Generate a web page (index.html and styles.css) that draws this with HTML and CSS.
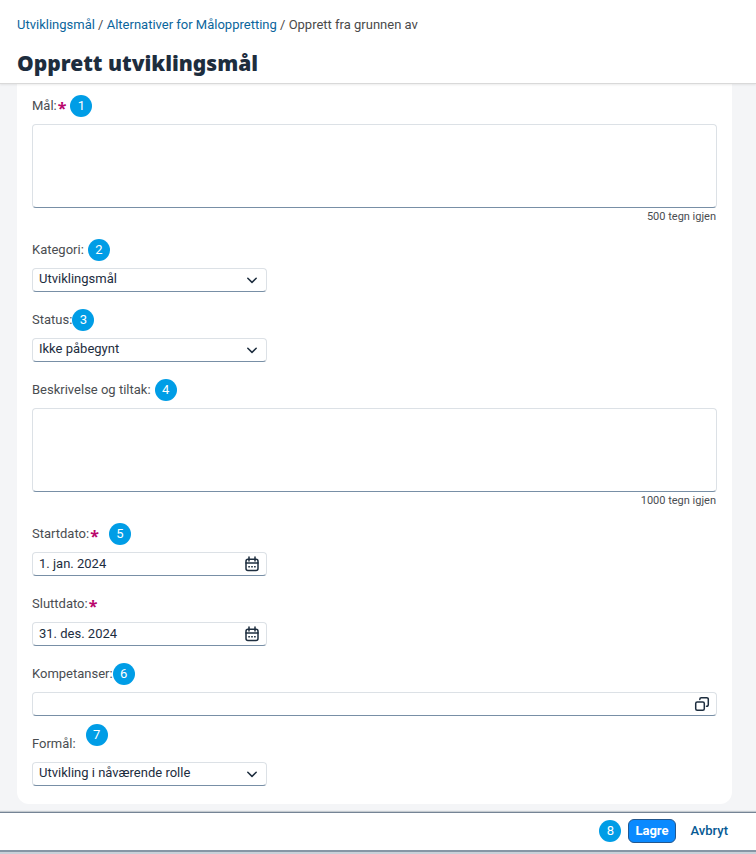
FILE: index.html
```html
<!DOCTYPE html>
<html lang="no">
<head>
	<meta charset="UTF-8">
	<meta name="viewport" content="width=device-width, initial-scale=1">
	<title>Opprett utviklingsmål</title>
	<link rel="stylesheet" href="styles.css">
</head>
<body>
	<header class="page-header">
		<nav class="breadcrumb">
			<a href="#">Utviklingsmål</a> / <a href="#">Alternativer for Måloppretting</a> / <span>Opprett fra grunnen av</span>
		</nav>
		<h1>Opprett utviklingsmål</h1>
	</header>

	<main class="content">
		<form class="card" id="goal-form">
			<div class="field">
				<div class="label-row">
					<label for="goal">Mål:<b class="required">*</b></label>
					<span class="badge">1</span>
				</div>
				<textarea class="control area" id="goal"></textarea>
				<div class="counter">500 tegn igjen</div>
			</div>

			<div class="field">
				<div class="label-row">
					<label for="category">Kategori:</label>
					<span class="badge">2</span>
				</div>
				<div class="box">
					<select class="control" id="category"><option>Utviklingsmål</option></select>
					<svg class="arrow" viewBox="0 0 16 16"><path d="M3.8 6.2 8 10.4l4.2-4.2"/></svg>
				</div>
			</div>

			<div class="field">
				<div class="label-row">
					<label for="status">Status:</label>
					<span class="badge near">3</span>
				</div>
				<div class="box">
					<select class="control" id="status"><option>Ikke påbegynt</option></select>
					<svg class="arrow" viewBox="0 0 16 16"><path d="M3.8 6.2 8 10.4l4.2-4.2"/></svg>
				</div>
			</div>

			<div class="field">
				<div class="label-row">
					<label for="description">Beskrivelse og tiltak:</label>
					<span class="badge">4</span>
				</div>
				<textarea class="control area" id="description"></textarea>
				<div class="counter">1000 tegn igjen</div>
			</div>

			<div class="field">
				<div class="label-row">
					<label for="start">Startdato:<b class="required">*</b></label>
					<span class="badge far">5</span>
				</div>
				<div class="box">
					<input class="control" id="start" type="text" value="1. jan. 2024">
					<button class="icon" type="button" aria-label="Velg startdato">
						<svg viewBox="0 0 16 16"><rect x="2" y="3.2" width="12" height="11.3" rx="2"/><path d="M2 7h12M5 1v4M11 1v4"/><path class="dots" d="M4.300 10.700h1.600M7.200 10.700h1.600M10.100 10.700h1.600"/></svg>
					</button>
				</div>
			</div>

			<div class="field">
				<div class="label-row">
					<label for="end">Sluttdato:<b class="required">*</b></label>
				</div>
				<div class="box">
					<input class="control" id="end" type="text" value="31. des. 2024">
					<button class="icon" type="button" aria-label="Velg sluttdato">
						<svg viewBox="0 0 16 16"><rect x="2" y="3.2" width="12" height="11.3" rx="2"/><path d="M2 7h12M5 1v4M11 1v4"/><path class="dots" d="M4.300 10.700h1.600M7.200 10.700h1.600M10.100 10.700h1.600"/></svg>
					</button>
				</div>
			</div>

			<div class="field">
				<div class="label-row">
					<label for="skills">Kompetanser:</label>
					<span class="badge near">6</span>
				</div>
				<div class="box wide">
					<input class="control" id="skills" type="text">
					<button class="icon" type="button" aria-label="Velg kompetanser">
						<svg viewBox="0 0 16 16"><rect x="1.700" y="6" width="8.600" height="8.300" rx="1.500"/><path d="M5.800 3.600V3.200a1.500 1.500 0 0 1 1.500-1.500h5.500a1.500 1.500 0 0 1 1.500 1.500v5.600a1.500 1.500 0 0 1-1.500 1.500h-.3"/></svg>
					</button>
				</div>
			</div>

			<div class="field">
				<div class="label-row">
					<label for="purpose">Formål:</label>
					<span class="badge far raised">7</span>
				</div>
				<div class="box">
					<select class="control" id="purpose"><option>Utvikling i nåværende rolle</option></select>
					<svg class="arrow" viewBox="0 0 16 16"><path d="M3.8 6.2 8 10.4l4.2-4.2"/></svg>
				</div>
			</div>
		</form>
	</main>

	<footer class="page-footer">
		<span class="badge">8</span>
		<button class="btn btn-primary" type="submit" form="goal-form">Lagre</button>
		<button class="btn" type="button">Avbryt</button>
	</footer>
</body>
</html>
```
FILE: styles.css
```css
* {
	box-sizing: border-box;
}

body {
	margin: 0;
	min-height: 100vh;
	padding-bottom: 2px;
	display: flex;
	flex-direction: column;
	background: #c9d1d9;
	color: #1d2d3e;
	font: 13px/20px Roboto, "Liberation Sans", sans-serif;
}

/* header */
.page-header {
	padding: 15px 17px 5px;
	background: #fff;
	border-bottom: 1px solid #d9d9d9;
	box-shadow: 0 1px 2px rgba(0, 0, 0, .08);
	position: relative;
}

.breadcrumb {
	color: #4a4a4a;
}

.breadcrumb a {
	color: #0b659c;
	text-decoration: none;
}

h1 {
	margin: 13px 0 0;
	font: 900 21px/30px "Noto Sans", sans-serif;
}

/* form */
.content {
	flex: 1;
	padding: 0 24px 8px 17px;
	background: #f4f5f7;
}

.card {
	padding: 10px 15px 18px;
	display: flex;
	flex-direction: column;
	gap: 16px;
	background: #fff;
	border-radius: 0 0 12px 12px;
}

.label-row {
	height: 24px;
	margin-bottom: 6px;
	display: flex;
	align-items: center;
	color: #4a4d51;
}

.label-row label {
	display: flex;
}

.required {
	height: 20px;
	margin-left: 1px;
	color: #ba066c;
	font: 700 16px/24px "Noto Sans", sans-serif;
}

.badge {
	width: 22px;
	height: 22px;
	margin-left: 4px;
	border-radius: 50%;
	background: #009de6;
	color: #fff;
	font-size: 13px;
	line-height: 22px;
	text-align: center;
}

.badge.near {
	margin-left: 0;
}

.badge.far {
	margin-left: 10px;
}

.badge.raised {
	position: relative;
	top: -9px;
}

.control {
	display: block;
	width: 100%;
	height: 24px;
	margin: 0;
	padding: 0 28px 2px 6px;
	border: 1px solid #dce1e6;
	border-bottom-color: #788fa6;
	border-radius: 4px;
	background: #fff;
	color: #1d2d3e;
	font: inherit;
	appearance: none;
}

.area {
	height: 84px;
	padding: 6px;
	resize: none;
}

.counter {
	margin-top: 3px;
	padding-right: 1px;
	color: #4a4d51;
	font-size: 11px;
	line-height: 11px;
	text-align: right;
}

.box {
	position: relative;
	width: 235px;
	max-width: 100%;
}

.box.wide {
	width: 100%;
}

.arrow,
.icon {
	position: absolute;
	top: 4px;
	right: 7px;
	width: 16px;
	height: 16px;
}

.icon {
	padding: 0;
	border: 0;
	background: none;
}

.box svg {
	display: block;
	width: 16px;
	height: 16px;
	fill: none;
	stroke: #1d2d3e;
	stroke-width: 1.5;
	stroke-linecap: round;
	stroke-linejoin: round;
	pointer-events: none;
}

.box .dots {
	stroke-linecap: butt;
}

/* footer */
.page-footer {
	padding: 6px 16px 7px;
	display: flex;
	justify-content: flex-end;
	align-items: center;
	background: #fff;
	border-top: 1px solid #758495;
	border-bottom: 2px solid #8796a5;
	box-shadow: 0 -1px 1px rgba(90, 105, 120, .3);
}

.btn {
	height: 24px;
	margin-left: 3px;
	padding: 0 11px;
	border: 1px solid transparent;
	border-radius: 6px;
	background: none;
	color: #075a94;
	font: 500 13px/20px Roboto, sans-serif;
}

.btn-primary {
	margin-left: 7px;
	padding: 0 6px;
	border-color: #22578f;
	background: #0a8aff;
	color: #fff;
	font-weight: 700;
}
```
